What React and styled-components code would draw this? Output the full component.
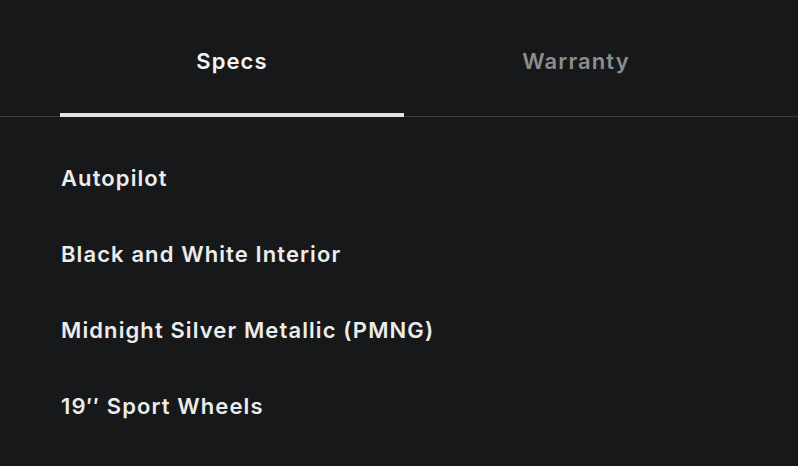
import React, { useState } from "react";
import styled, { createGlobalStyle } from "styled-components";

const Global = createGlobalStyle`
  html, body { margin: 0; padding: 0; background: #17181a; }
  body { font-family: Inter, "Liberation Sans", sans-serif; -webkit-font-smoothing: antialiased; }
`;

const Page = styled.div`
  width: 798px;
  height: 466px;
  background: #17181a;
  overflow: hidden;
`;

const TabBar = styled.div`
  display: flex;
  padding: 0 50px 0 60px;
  border-bottom: 1px solid #3a3b3d;
`;

const Tab = styled.button`
  flex: 1;
  height: 117px;
  box-sizing: border-box;
  padding: 9px 0 0;
  margin: 0 0 -1px;
  background: none;
  border: none;
  border-bottom: 4px solid ${(p) => (p.$active ? "#e2e2e2" : "transparent")};
  color: ${(p) => (p.$active ? "#f4f4f4" : "#8c8d8f")};
  font-family: Inter, "Liberation Sans", sans-serif;
  font-weight: 600;
  font-size: 22px;
  letter-spacing: 1.1px;
  text-align: center;
  align-self: flex-start;
  cursor: pointer;
`;

const List = styled.ul`
  list-style: none;
  margin: 0;
  padding: 48px 0 0 61px;
  display: flex;
  flex-direction: column;
  gap: 50px;
`;

const Item = styled.li`
  color: #ececec;
  font-size: 22px;
  font-weight: 600;
  letter-spacing: 1.1px;
  line-height: 26px;
`;

const specs = [
  "Autopilot",
  "Black and White Interior",
  "Midnight Silver Metallic (PMNG)",
  "19\u2032\u2032 Sport Wheels",
];

export default function App() {
  const [tab, setTab] = useState("specs");
  return (
    <Page>
      <Global />
      <TabBar>
        <Tab $active={tab === "specs"} onClick={() => setTab("specs")}>Specs</Tab>
        <Tab $active={tab === "warranty"} onClick={() => setTab("warranty")}>Warranty</Tab>
      </TabBar>
      <List>
        {specs.map((s) => (
          <Item key={s}>{s}</Item>
        ))}
      </List>
    </Page>
  );
}
